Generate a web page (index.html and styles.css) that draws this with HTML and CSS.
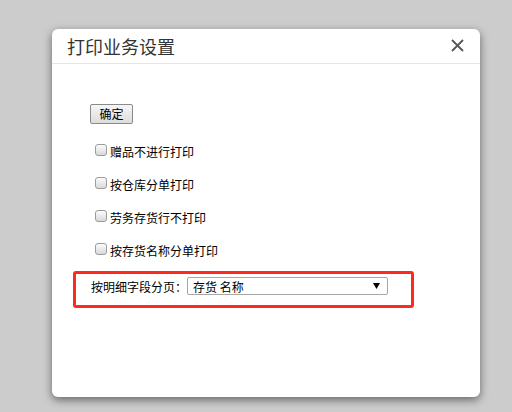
FILE: index.html
```html
<!DOCTYPE html>
<html lang="zh-CN">
<head>
<meta charset="utf-8">
<title>打印业务设置</title>
<link rel="stylesheet" href="styles.css">
</head>
<body>
<div class="modal">
  <div class="modal-header">
    <h4 class="modal-title">打印业务设置</h4>
    <button class="close" type="button" aria-label="关闭">
      <svg width="13" height="13" viewBox="0 0 13 13"><path d="M1 1 L12 12 M12 1 L1 12" stroke="#555" stroke-width="1.8" fill="none"/></svg>
    </button>
  </div>
  <div class="modal-body">
    <button class="btn" type="button">确定</button>
    <ul class="options">
      <li><label><input type="checkbox" class="cb">赠品不进行打印</label></li>
      <li><label><input type="checkbox" class="cb">按仓库分单打印</label></li>
      <li><label><input type="checkbox" class="cb">劳务存货行不打印</label></li>
      <li><label><input type="checkbox" class="cb">按存货名称分单打印</label></li>
    </ul>
    <div class="paging">
      <span class="paging-label">按明细字段分页：</span>
      <div class="select">
        <span>存货 名称</span>
        <svg width="7" height="6" viewBox="0 0 7 6"><path d="M0 0 H7 L3.5 6 Z" fill="#000"/></svg>
      </div>
    </div>
  </div>
</div>
</body>
</html>
```
FILE: styles.css
```css
html, body {
  margin: 0;
  height: 412px;
  overflow: hidden;
}
body {
  background: #cccccc;
  font-family: "Noto Sans CJK SC", "Liberation Sans", sans-serif;
  padding: 29px 0 0 52px;
  box-sizing: border-box;
}
.modal {
  width: 428px;
  height: 368px;
  background: #fff;
  border-radius: 6px;
  box-shadow: 0 3px 9px rgba(0, 0, 0, 0.5);
  overflow: hidden;
}
.modal-header {
  height: 34px;
  border-bottom: 1px solid #e5e5e5;
  display: flex;
  align-items: center;
  justify-content: space-between;
  padding: 0 16px 0 15px;
}
.modal-title {
  margin: 0;
  font-size: 18px;
  font-weight: normal;
  line-height: 1;
  color: #333;
}
.close {
  border: 0;
  background: none;
  padding: 0;
  width: 13px;
  height: 13px;
  display: flex;
  margin-top: -1px;
}
.modal-body {
  padding: 40px 0 0 21px;
}
.btn {
  display: block;
  margin-left: 17px;
  width: 43px;
  height: 20px;
  padding: 0;
  font-family: inherit;
  font-size: 12px;
  line-height: 1;
  color: #000;
  border: 1px solid #8a8a8a;
  border-radius: 2px;
  background: linear-gradient(#f6f6f6, #dddddd);
}
.options {
  list-style: none;
  margin: 11px 0 0;
  padding: 0 0 0 22px;
}
.options li {
  height: 33px;
  display: flex;
  align-items: center;
}
.options label {
  display: flex;
  align-items: center;
  font-size: 12px;
  color: #000;
}
.cb {
  appearance: none;
  -webkit-appearance: none;
  width: 12px;
  height: 12px;
  margin: 0 3px 4px 0;
  border: 1px solid #9c9c9c;
  border-radius: 3px;
  background: linear-gradient(#fcfcfc, #d8d8d8);
  box-sizing: border-box;
}
.paging {
  margin-top: 4px;
  width: 341px;
  box-sizing: border-box;
  border: 3px solid #ff2a1e;
  border-radius: 3px;
  padding: 3px 0 10px 15px;
  display: flex;
  align-items: center;
}
.paging-label {
  font-size: 12px;
  color: #000;
}
.select {
  width: 201px;
  height: 18px;
  box-sizing: border-box;
  border: 1px solid #a6a6a6;
  border-radius: 2px;
  padding: 0 7px 0 5px;
  display: flex;
  align-items: center;
  justify-content: space-between;
  font-size: 12px;
  color: #000;
}
```
